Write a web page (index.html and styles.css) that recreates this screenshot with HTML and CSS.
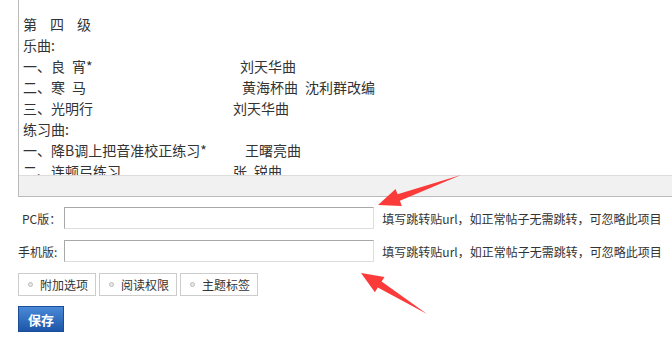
FILE: index.html
```html
<!DOCTYPE html>
<html lang="zh-CN">
<head>
    <meta charset="UTF-8">
    <title>发帖 - 跳转设置</title>
    <link rel="stylesheet" href="styles.css">
</head>
<body>
    <div class="editor">
        <div class="editor-body">
            <p class="level">第四级</p>
            <p>乐曲:</p>
            <p class="piece"><span class="title col-a">一、良&ensp;宵*</span><span>刘天华曲</span></p>
            <p class="piece"><span class="title col-b">二、寒&ensp;马</span><span>黄海杯曲&ensp;沈利群改编</span></p>
            <p class="piece"><span class="title col-c">三、光明行</span><span>刘天华曲</span></p>
            <p>练习曲:</p>
            <p class="piece"><span class="title col-d">一、降B调上把音准校正练习*</span><span>王曙亮曲</span></p>
            <p class="piece"><span class="title col-c">二、连顿弓练习</span><span>张&ensp;锐曲</span></p>
        </div>
        <div class="editor-bar"></div>
    </div>

    <div class="form">
        <div class="row row-pc">
            <label>PC版：</label>
            <input type="text">
            <span class="hint">填写跳转贴url，如正常帖子无需跳转，可忽略此项目</span>
        </div>
        <div class="row row-m">
            <label>手机版:</label>
            <input type="text">
            <span class="hint">填写跳转贴url，如正常帖子无需跳转，可忽略此项目</span>
        </div>
        <div class="tabs">
            <button class="tab"><i class="dot"></i>附加选项</button>
            <button class="tab"><i class="dot"></i>阅读权限</button>
            <button class="tab"><i class="dot"></i>主题标签</button>
        </div>
        <button class="save">保存</button>
    </div>

    <!-- annotation arrows -->
    <svg class="marks" width="672" height="343" viewBox="0 0 672 343">
        <polygon points="461,175 397.5,194.2 395.6,189 378,205 401.8,206 399.9,200.8" />
        <polygon points="427,314 381.6,281.6 384.5,276.9 361,273 374.9,292.3 377.8,287.6" />
    </svg>
</body>
</html>
```

FILE: styles.css
```css
body {
    margin: 0;
    background: #fff;
    color: #333;
    font-family: "Noto Sans CJK SC", "Microsoft YaHei", sans-serif;
    position: relative;
}
.editor {
    margin-left: 18px;
    border-left: 1px solid #bbb;
}
.editor-body {
    height: 175px;
    overflow: hidden;
    padding-left: 4px;
    font-size: 14px;
    line-height: 21px;
    box-sizing: border-box;
    padding-top: 14px;
}
.editor-body p {
    margin: 0;
    white-space: nowrap;
}
.level {
    letter-spacing: 13px;
}
.piece {
    display: flex;
}
.title {
    flex: none;
}
.col-a { width: 217px; }
.col-b { width: 219px; }
.col-c { width: 210px; }
.col-d { width: 222px; }
.editor-bar {
    height: 20px;
    background: #f1f1f1;
    border-top: 1px solid #ddd;
    border-bottom: 1px solid #bbb;
}
.form {
    padding: 10px 0 0 18px;
    font-size: 12px;
}
.row {
    display: flex;
    align-items: center;
    height: 22px;
    margin-bottom: 11px;
}
.row label {
    flex: none;
}
.row-pc label {
    padding-left: 4px;
}
.row input {
    width: 310px;
    height: 22px;
    box-sizing: border-box;
    margin: 0 0 0 3px;
    border: 1px solid;
    border-color: #a8a8a8 #ddd #ddd #a8a8a8;
    background: #fff;
}
.row-m input {
    margin-left: 7px;
}
.hint {
    margin-left: 8px;
    white-space: nowrap;
}
.tabs {
    display: flex;
    gap: 3px;
}
.tab {
    width: 78px;
    height: 23px;
    border: 1px solid #ccc;
    background: #fff;
    color: #333;
    font-family: inherit;
    font-size: 12px;
    padding: 0 0 0 9px;
    display: flex;
    align-items: center;
}
.dot {
    width: 5px;
    height: 5px;
    border-radius: 50%;
    border: 1px solid #bbb;
    background: #e8e8e8;
    margin-right: 7px;
    box-sizing: border-box;
}
.save {
    display: block;
    margin-top: 10px;
    width: 46px;
    height: 26px;
    border: 1px solid #1c4e98;
    background: linear-gradient(#4a8ad8, #1d56a8);
    color: #fff;
    font-family: inherit;
    font-size: 13px;
    font-weight: bold;
    padding: 0;
}
.marks {
    position: absolute;
    left: 0;
    top: 0;
    pointer-events: none;
}
.marks polygon {
    fill: #fb3a3a;
}
```
